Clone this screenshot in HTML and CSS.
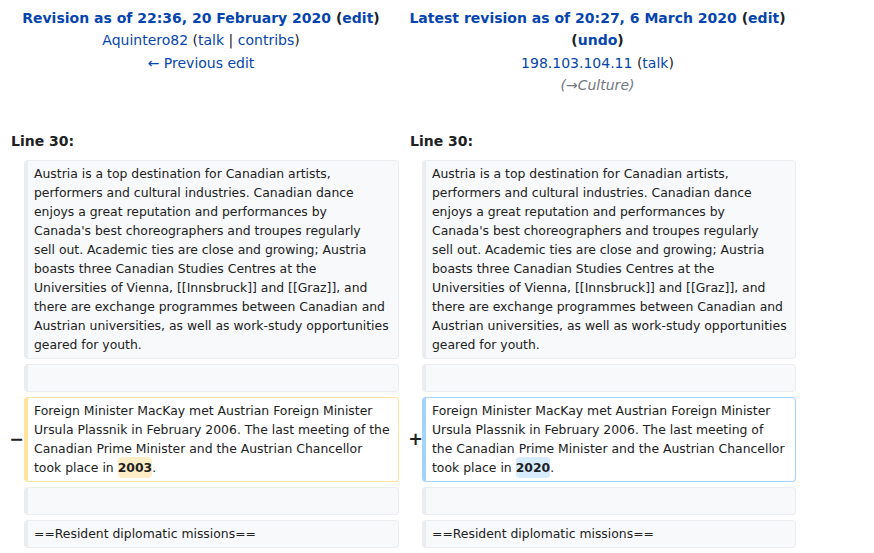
FILE: index.html
```html
<!DOCTYPE html>
<html lang="en">
<head>
<meta charset="utf-8">
<title>Diff</title>
<link rel="stylesheet" href="styles.css">
</head>
<body>
<div class="diff">
  <div class="hdr hdr-left">
    <div class="hdr-title"><a href="#">Revision as of 22:36, 20 February 2020</a> (<a href="#">edit</a>)</div>
    <div><a href="#">Aquintero82</a> (<a href="#">talk</a> | <a href="#">contribs</a>)</div>
    <div><a href="#">← Previous edit</a></div>
  </div>
  <div class="hdr hdr-right">
    <div class="hdr-title"><a href="#">Latest revision as of 20:27, 6 March 2020</a> (<a href="#">edit</a>)</div>
    <div class="hdr-title">(<a href="#">undo</a>)</div>
    <div><a href="#">198.103.104.11</a> (<a href="#">talk</a>)</div>
    <div class="comment">(→Culture)</div>
  </div>

  <div class="lineno lineno-left">Line 30:</div>
  <div class="lineno lineno-right">Line 30:</div>

  <div class="marker"></div>
  <div class="cell context">Austria is a top destination for Canadian artists,<br>performers and cultural industries. Canadian dance<br>enjoys a great reputation and performances by<br>Canada's best choreographers and troupes regularly<br>sell out. Academic ties are close and growing; Austria<br>boasts three Canadian Studies Centres at the<br>Universities of Vienna, [[Innsbruck]] and [[Graz]], and<br>there are exchange programmes between Canadian and<br>Austrian universities, as well as work-study opportunities<br>geared for youth.</div>
  <div class="marker"></div>
  <div class="cell context">Austria is a top destination for Canadian artists,<br>performers and cultural industries. Canadian dance<br>enjoys a great reputation and performances by<br>Canada's best choreographers and troupes regularly<br>sell out. Academic ties are close and growing; Austria<br>boasts three Canadian Studies Centres at the<br>Universities of Vienna, [[Innsbruck]] and [[Graz]], and<br>there are exchange programmes between Canadian and<br>Austrian universities, as well as work-study opportunities<br>geared for youth.</div>

  <div class="marker"></div>
  <div class="cell context"><br></div>
  <div class="marker"></div>
  <div class="cell context"><br></div>

  <div class="marker marker-left">−</div>
  <div class="cell deleted">Foreign Minister MacKay met Austrian Foreign Minister<br>Ursula Plassnik in February 2006. The last meeting of the<br>Canadian Prime Minister and the Austrian Chancellor<br>took place in <span class="change change-del">2003</span>.</div>
  <div class="marker marker-right">+</div>
  <div class="cell added">Foreign Minister MacKay met Austrian Foreign Minister<br>Ursula Plassnik in February 2006. The last meeting of<br>the Canadian Prime Minister and the Austrian Chancellor<br>took place in <span class="change change-add">2020</span>.</div>

  <div class="marker"></div>
  <div class="cell context"><br></div>
  <div class="marker"></div>
  <div class="cell context"><br></div>

  <div class="marker"></div>
  <div class="cell context">==Resident diplomatic missions==</div>
  <div class="marker"></div>
  <div class="cell context">==Resident diplomatic missions==</div>
</div>
</body>
</html>
```

FILE: styles.css
```css
html, body {
  margin: 0;
  padding: 0;
  background: #ffffff;
}

body {
  font-family: "DejaVu Sans", sans-serif;
  color: #202122;
  font-size: 14px;
}

a {
  color: #0645ad;
  text-decoration: none;
}

.diff {
  display: grid;
  grid-template-columns: 16px 375px 23px 374px;
  row-gap: 5px;
  padding: 7px 0 0 8px;
  width: 796px;
  box-sizing: border-box;
}

.hdr {
  grid-column: span 2;
  text-align: center;
  line-height: 22.4px;
  font-size: 14px;
}

.hdr-left {
  padding-right: 5px;
}

.hdr-title {
  font-weight: bold;
}

.comment {
  font-style: italic;
  color: #72777d;
}

.lineno {
  grid-column: span 2;
  font-weight: bold;
  font-size: 14px;
  line-height: 22px;
  padding: 28px 0 3px 3px;
}

.lineno-right {
  padding-left: 11px;
}

.marker {
  font-weight: bold;
  font-size: 17.5px;
  display: flex;
  align-items: center;
  justify-content: flex-end;
  padding-right: 0;
  color: #202122;
}

.marker-right {
  padding-right: 0;
  margin-right: -1px;
}

.cell {
  font-size: 12.4px;
  line-height: 19px;
  padding: 3.5px 5px 3.5px 6px;
  border-style: solid;
  border-width: 1px 1px 1px 4px;
  border-radius: 4px;
  white-space: nowrap;
}

.context {
  background: #f8f9fa;
  border-color: #eaecf0;
}

.deleted {
  background: #ffffff;
  border-color: #ffe49c;
}

.added {
  background: #ffffff;
  border-color: #a3d3ff;
}

.change {
  font-weight: bold;
  padding: 3px 0;
  border-radius: 4px;
}

.change-del {
  background: #feeec8;
}

.change-add {
  background: #d8ecff;
}
```
